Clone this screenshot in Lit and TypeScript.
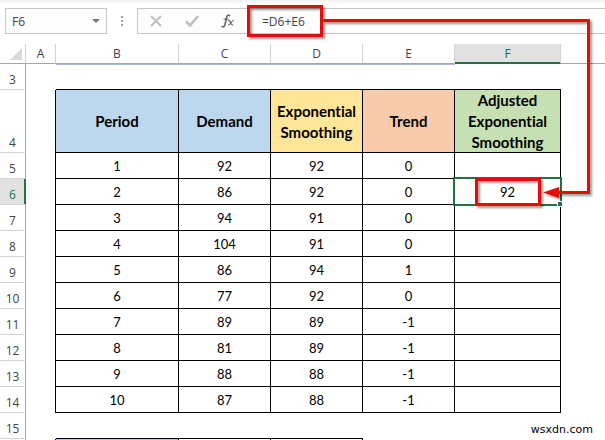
import { LitElement, html, css, nothing } from "lit";
import { customElement, state } from "lit/decorators.js";
import { classMap } from "lit/directives/class-map.js";

const COLUMNS = ["A", "B", "C", "D", "E", "F", ""];

const HEADINGS = [
  { text: "Period", tone: "blue" },
  { text: "Demand", tone: "blue" },
  { text: "Exponential Smoothing", tone: "yellow" },
  { text: "Trend", tone: "orange" },
  { text: "Adjusted Exponential Smoothing", tone: "green" },
];

const DATA: (number | null)[][] = [
  [1, 92, 92, 0, null],
  [2, 86, 92, 0, 92],
  [3, 94, 91, 0, null],
  [4, 104, 91, 0, null],
  [5, 86, 94, 1, null],
  [6, 77, 92, 0, null],
  [7, 89, 89, -1, null],
  [8, 81, 89, -1, null],
  [9, 88, 88, -1, null],
  [10, 87, 88, -1, null],
];

@customElement("formula-bar")
export class FormulaBar extends LitElement {
  static styles = css`
    :host {
      display: flex;
      height: 44px;
      padding: 8px 0 10px 5px;
      box-sizing: border-box;
      background: linear-gradient(#f0f0f0, #ffffff 4px);
      font-family: "Open Sans", "Noto Sans", sans-serif;
      color: #444444;
    }
    .box {
      box-sizing: border-box;
      height: 26px;
      border: 1px solid #c6c6c6;
      background: #fdfdfd;
      display: flex;
      align-items: center;
    }
    .name {
      width: 102px;
    }
    input {
      border: 0;
      outline: 0;
      padding: 2px 0 0;
      margin: 0;
      min-width: 0;
      flex: 1;
      background: transparent;
      font: inherit;
      font-size: 12px;
      line-height: 16px;
      color: inherit;
    }
    .name input {
      padding-left: 6px;
    }
    button {
      border: 0;
      padding: 0;
      background: transparent;
      display: grid;
      place-items: center;
      height: 24px;
    }
    svg {
      display: block;
    }
    .drop {
      width: 20px;
    }
    .grip {
      width: 30px;
      display: grid;
      place-items: center;
      height: 26px;
    }
    .tools {
      width: 111px;
      border-right: 0;
    }
    .tools button {
      width: 36px;
    }
    .formula {
      flex: 1;
      border-left: 0;
      border-right: 0;
    }
    .formula input {
      padding-left: 14px;
    }
  `;

  render() {
    return html`
      <div class="box name">
        <input aria-label="Name box" .value=${"F6"} />
        <button class="drop" aria-label="Show names">
          <svg width="8" height="4"><path d="M0 0h8L4 4z" fill="#777777" /></svg>
        </button>
      </div>
      <div class="grip">
        <svg width="2" height="10" fill="#a0a0a0">
          <path d="M0 0h2v2H0zM0 4h2v2H0zM0 8h2v2H0z" />
        </svg>
      </div>
      <div class="box tools">
        <button aria-label="Cancel">
          <svg width="12" height="12" stroke="#c0c0c0" stroke-width="2">
            <path d="M1 1l10 10M11 1L1 11" />
          </svg>
        </button>
        <button aria-label="Enter">
          <svg width="14" height="12" fill="none" stroke="#c0c0c0" stroke-width="2.6">
            <path d="M1 6.500l4 4L13 1" />
          </svg>
        </button>
        <button aria-label="Insert function">
          <svg width="14" height="14" fill="none" stroke="#666666" stroke-linecap="round">
            <path d="M8.500 1.600C7.200.6 6 1.400 5.600 3.500L4 10.500C3.600 12.600 2.500 13.300 1.200 12.500" stroke-width="1.600" />
            <path d="M3 5h4" stroke-width="1.200" />
            <path d="M7.500 6.500c2-.8 2 5 4.500 4.500M12.500 6.500c-2 0-3 4.500-5 4.500" stroke-width="1.200" />
          </svg>
        </button>
      </div>
      <div class="box formula">
        <input aria-label="Formula" .value=${"=D6+E6"} />
      </div>
    `;
  }
}

@customElement("sheet-grid")
export class SheetGrid extends LitElement {
  @state() private selectedRow = 6;

  static styles = css`
    :host {
      display: block;
      font-family: Lato, "Noto Sans", sans-serif;
      font-variant-ligatures: none;
      color: #000000;
    }
    table {
      width: 100%;
      table-layout: fixed;
      border-collapse: separate;
      border-spacing: 0;
    }
    .w-rows { width: 26px; }
    .w-A { width: 30px; }
    .w-B { width: 123px; }
    .w-C, .w-D, .w-E { width: 92px; }
    .w-F { width: 106px; }
    th, td {
      box-sizing: border-box;
      height: 26px;
      padding: 0;
      text-align: center;
      font-size: 13px;
      line-height: 18px;
      font-weight: 400;
    }
    .col, .row {
      font-family: "Open Sans", "Noto Sans", sans-serif;
      font-size: 12px;
      color: #444444;
    }
    .col {
      height: 20px;
      border-right: 1px solid #d4d4d4;
      border-bottom: 1px solid #a6a6a6;
    }
    .col:last-child {
      border-right: 0;
    }
    .col.active {
      background: #e1e1e1;
      color: #217346;
      border-bottom-color: #217346;
      box-shadow: inset 0 -1px #217346;
    }
    .corner svg {
      display: block;
      margin: 4px 3px 3px auto;
    }
    .row {
      vertical-align: bottom;
      border-right: 1px solid #a6a6a6;
      border-bottom: 1px solid #d4d4d4;
    }
    .row.active {
      background: #e1e1e1;
      color: #217346;
      border-right-color: #217346;
      box-shadow: inset -1px 0 #217346;
    }
    .cell {
      border-right: 1px solid #000000;
      border-bottom: 1px solid #000000;
    }
    .left, .side { border-right: 1px solid #000000; }
    .under { border-bottom: 1px solid #000000; }
    .frozen { box-shadow: inset 0 1px #a9b8d3; }
    .head {
      height: 63px;
      font-size: 15px;
      line-height: 21px;
      font-weight: 700;
      border-bottom: 0;
      box-shadow: inset 0 -1px #000000;
    }
    .blue { background: #bdd7ee; }
    .yellow { background: #ffe699; }
    .orange { background: #f8cbad; }
    .green { background: #c6e0b4; }
    .dusk { background: #b4c6e7; }
    .selected { position: relative; }
    .selected::before {
      content: "";
      position: absolute;
      inset: -2px;
      border: 2px solid #217346;
    }
    .selected::after {
      content: "";
      position: absolute;
      right: -3px;
      bottom: -3px;
      width: 4px;
      height: 4px;
      border: 1px solid #ffffff;
      background: #217346;
    }
  `;

  private rowHead(n: number) {
    return html`<th scope="row" class=${classMap({ row: true, active: n === this.selectedRow })}>${n}</th>`;
  }

  render() {
    return html`
      <table>
        <colgroup>
          <col class="w-rows" />
          ${COLUMNS.map((c) => html`<col class=${c ? `w-${c}` : ""} />`)}
        </colgroup>
        <thead>
          <tr>
            <th class="col corner">
              <svg width="12" height="12"><path d="M12 0v12H0z" fill="#d9d9d9" /></svg>
            </th>
            ${COLUMNS.map(
              (c) => html`<th scope="col" class=${classMap({ col: true, active: c === "F" })}>${c || nothing}</th>`
            )}
          </tr>
        </thead>
        <tbody>
          <tr>
            ${this.rowHead(3)}
            <td></td>
            ${HEADINGS.map((_, i) => html`<td class=${classMap({ under: true, frozen: i < 4 })}></td>`)}
            <td></td>
          </tr>
          <tr>
            ${this.rowHead(4)}
            <td class="left"></td>
            ${HEADINGS.map((h) => html`<th scope="col" class="cell head ${h.tone}">${h.text}</th>`)}
            <td></td>
          </tr>
          ${DATA.map(
            (values, i) => html`<tr>
              ${this.rowHead(i + 5)}
              <td class="left"></td>
              ${values.map(
                (v, j) => html`<td class=${classMap({
                  cell: true,
                  selected: j === 4 && i + 5 === this.selectedRow,
                })}>${v ?? nothing}</td>`
              )}
              <td></td>
            </tr>`
          )}
          <tr>
            ${this.rowHead(15)}
            <td></td>
            <td class="under"></td>
            <td class="under"></td>
            <td class="under"></td>
            <td></td>
            <td></td>
            <td></td>
          </tr>
          <tr>
            <td class="row"></td>
            <td class="left"></td>
            <td class="side dusk"></td>
            <td class="side"></td>
            <td class="side"></td>
            <td></td>
            <td></td>
            <td></td>
          </tr>
        </tbody>
      </table>
    `;
  }
}

@customElement("app-root")
export class AppRoot extends LitElement {
  static styles = css`
    :host {
      display: block;
      position: relative;
      height: 100vh;
      overflow: hidden;
      background: #ffffff;
    }
    .callout {
      position: absolute;
      left: 0;
      top: 0;
      pointer-events: none;
      filter: drop-shadow(2px 2px 1px rgba(0, 0, 0, 0.4));
    }
    .credit {
      position: absolute;
      right: 12px;
      bottom: 2px;
      font: 11px/16px "DejaVu Sans", sans-serif;
      color: #000000;
    }
  `;

  render() {
    return html`
      <formula-bar></formula-bar>
      <sheet-grid></sheet-grid>
      <svg class="callout" width="605" height="220" fill="none" stroke="#e60c0c" stroke-width="3">
        <rect x="248.500" y="6.500" width="73" height="29" />
        <path d="M323 20.500H588.500V192.500H556" />
        <rect x="476.500" y="179.500" width="63" height="25" />
        <path d="M543 192.500L559 187V198z" fill="#e60c0c" stroke="none" />
      </svg>
      <span class="credit">wsxdn.com</span>
    `;
  }
}
